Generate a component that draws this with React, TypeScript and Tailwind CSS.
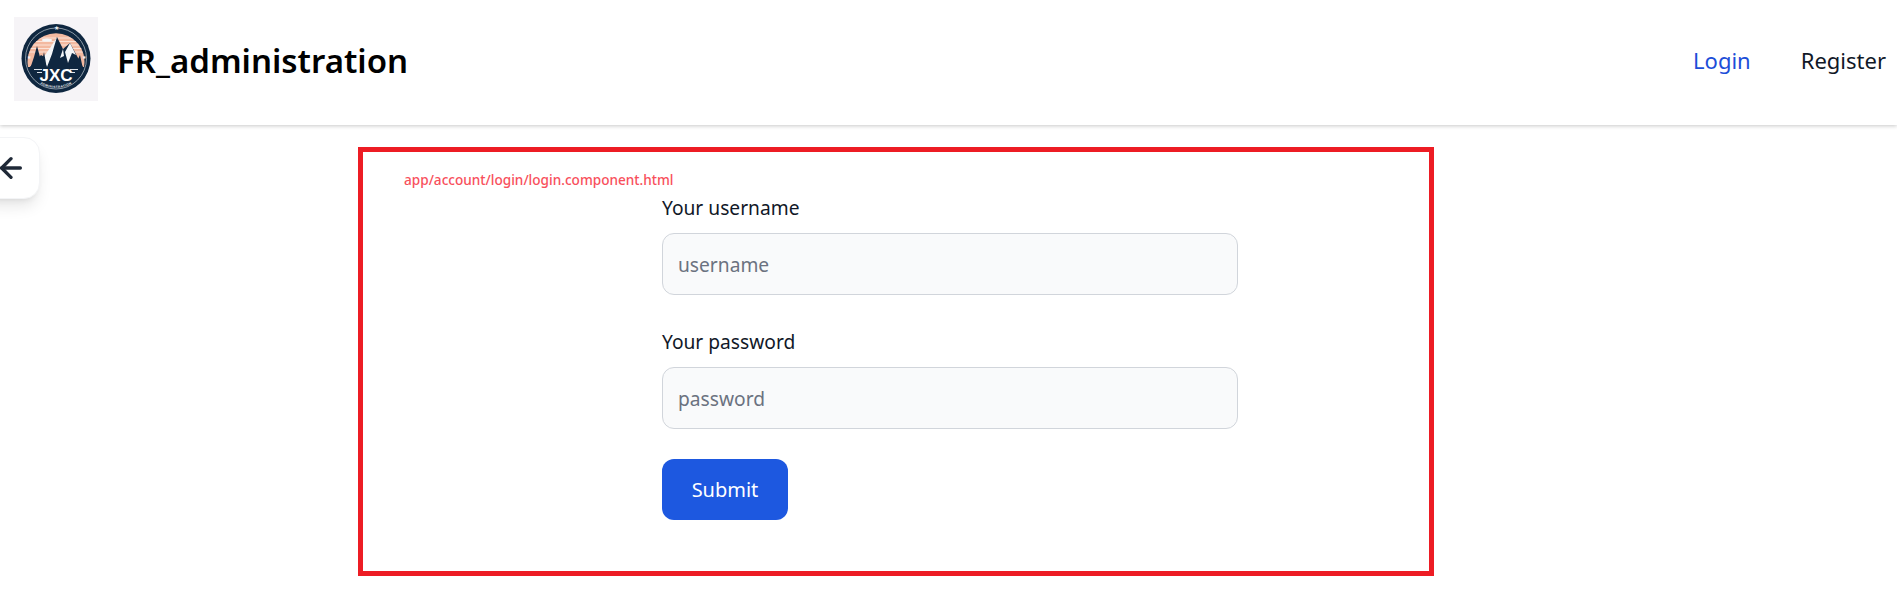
import { ArrowLeft } from 'lucide-react';

function Logo() {
  return (
    <div className="w-[84px] h-[84px] mb-[7px] shrink-0 bg-[#f6f4f7]">
      <svg viewBox="0 0 84 84" className="w-full h-full">
        <defs>
          <clipPath id="sky">
            <path d="M14 50 A 28.5 28.5 0 1 1 70 50 Z" />
          </clipPath>
          <path id="ring" d="M 12 46 A 30.500 30.500 0 0 0 72 46" fill="none" />
        </defs>
        <circle cx="42" cy="41.5" r="34.5" fill="#0f2740" />
        <circle cx="42" cy="41.5" r="30.5" fill="none" stroke="#dfe5ea" strokeWidth="0.6" />
        <g clipPath="url(#sky)">
          <rect x="10" y="10" width="64" height="42" fill="#f3b9a0" />
          <path d="M14 21h56M14 24.500h56M14 28h56M14 31.500h56M14 35h56" stroke="#fbe3d8" strokeWidth="1.1" />
          <path d="M14 52 L27 38 L32 41 L43 20 L49 32 L56 26 L70 52 Z" fill="#0f2740" />
          <path d="M43 20 L36 31 L29 41 L33 50 L38 37 L40 30 Z M56 26 L51 35 L54 46 L58 36 L62 38 Z M49 32 L46 41 L50 39 Z" fill="#f4f6f8" />
          <path d="M16 52 L20 40 L23 29 L26 40 L28 52 Z M25 52 L28 44 L30 35 L33 52 Z M54 52 L57 42 L59 36 L62 52 Z M60 52 L63 44 L66 38 L69 52 Z" fill="#0f2740" />
          <ellipse cx="33" cy="23" rx="5" ry="1.5" fill="#f4f6f8" />
        </g>
        <text x="42" y="12.500" textAnchor="middle" fill="#eef1f4" fontSize="6">★</text>
        <text x="14.5" y="42" textAnchor="middle" fill="#eef1f4" fontSize="4.5">★</text>
        <text x="69.5" y="42" textAnchor="middle" fill="#eef1f4" fontSize="4.5">★</text>
        <rect x="20" y="52" width="8" height="1" fill="#dfe5ea" />
        <rect x="56" y="52" width="8" height="1" fill="#dfe5ea" />
        <rect x="23" y="55" width="5" height="1" fill="#dfe5ea" />
        <rect x="56" y="55" width="5" height="1" fill="#dfe5ea" />
        <text x="42" y="64" textAnchor="middle" fill="#ffffff" fontSize="17" fontWeight="700" fontFamily="'Liberation Sans', sans-serif">
          JXC
        </text>
        <text fill="#eef1f4" fontSize="3.2" fontWeight="700" letterSpacing="0.4" fontFamily="'Liberation Sans', sans-serif">
          <textPath href="#ring" startOffset="50%" textAnchor="middle">ADMINISTRATION</textPath>
        </text>
      </svg>
    </div>
  );
}

export default function App() {
  return (
    <div className="relative min-h-[590px] bg-white font-['Noto_Sans',sans-serif] text-[#111827] overflow-hidden">
      <header className="flex items-center justify-between h-[125px] pl-[14px] pr-[11px] bg-white shadow-[0_1px_4px_rgba(0,0,0,0.22)]">
        <div className="flex items-center gap-[19px]">
          <Logo />
          <span className="-mt-[4px] text-[33px] leading-10 font-semibold text-black">FR_administration</span>
        </div>
        <nav className="flex items-center gap-[50px] text-[22px] leading-7 -mt-[5px]">
          <a className="text-[#1d4ed8]">Login</a>
          <a className="text-[#111827]">Register</a>
        </nav>
      </header>

      <button className="absolute left-[-24px] top-[137px] w-[64px] h-[62px] flex items-center justify-end pr-[12px] bg-white border border-gray-100 rounded-2xl shadow-lg">
        <ArrowLeft className="w-8 h-8 text-[#1f2937]" strokeWidth={2.5} />
      </button>

      <main className="pt-[22px] pl-[358px]">
        <section className="w-[1076px] h-[429px] border-[5px] border-[#ed1c24] pt-[20px]">
          <p className="ml-[41px] text-[13.6px] leading-4 font-medium text-[#f8505c]">app/account/login/login.component.html</p>
          <form className="ml-[299px] w-[576px] mt-[6px]">
            <label className="block mb-[11px] text-[19.2px] leading-7 text-[#111827]">Your username</label>
            <input
              placeholder="username"
              className="block w-full h-[62px] px-[15px] text-[19.2px] bg-[#f9fafb] border border-[#d1d5db] rounded-xl placeholder:text-[#6b7280]"
            />
            <label className="block mt-[33px] mb-[11px] text-[19.2px] leading-7 text-[#111827]">Your password</label>
            <input
              placeholder="password"
              className="block w-full h-[62px] px-[15px] text-[19.2px] bg-[#f9fafb] border border-[#d1d5db] rounded-xl placeholder:text-[#6b7280]"
            />
            <button
              type="button"
              className="block mt-[30px] w-[126px] h-[61px] text-[20px] text-white bg-[#1d58e0] rounded-xl"
            >
              Submit
            </button>
          </form>
        </section>
      </main>
    </div>
  );
}
